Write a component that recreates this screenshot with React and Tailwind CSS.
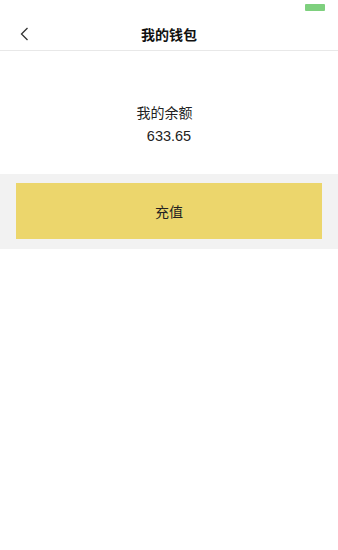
export default function App() {
  return (
    <div
      className="min-h-[550px] bg-white text-[#222]"
      style={{ fontFamily: '"Noto Sans CJK SC", "Liberation Sans", sans-serif' }}
    >
      {/* status bar */}
      <div className="h-[18px] flex justify-end items-start pt-[4px] pr-[13px]">
        <div className="w-[20px] h-[7px] rounded-[1px] bg-[#7ed07e]" />
      </div>

      {/* nav bar */}
      <div className="h-[33px] flex items-center border-b border-[#e8e8e8] relative">
        <button className="absolute left-[17px] top-[8px] w-[14px] h-[16px] flex items-center justify-center">
          <svg width="9" height="14" viewBox="0 0 9 14" fill="none">
            <path d="M7.5 1L1.5 7l6 6" stroke="#333" strokeWidth="1.3" />
          </svg>
        </button>
        <h1 className="flex-1 text-center text-[14px] font-bold leading-none text-[#111]">我的钱包</h1>
      </div>

      {/* balance */}
      <div className="h-[123px] flex flex-col items-center pt-[52px]">
        <p className="text-[14px] leading-[18px] text-[#222] pr-[9px]">我的余额</p>
        <p
          className="text-[14.5px] leading-[18px] mt-[6px] text-[#222]"
          style={{ fontFamily: '"Liberation Sans", sans-serif' }}
        >
          633.65
        </p>
      </div>

      {/* recharge */}
      <div className="bg-[#f2f2f2] px-[16px] pt-[9px] pb-[10px]">
        <button className="w-full h-[56px] bg-[#ecd66c] flex items-center justify-center text-[14px] text-[#222]">
          充值
        </button>
      </div>
    </div>
  )
}
